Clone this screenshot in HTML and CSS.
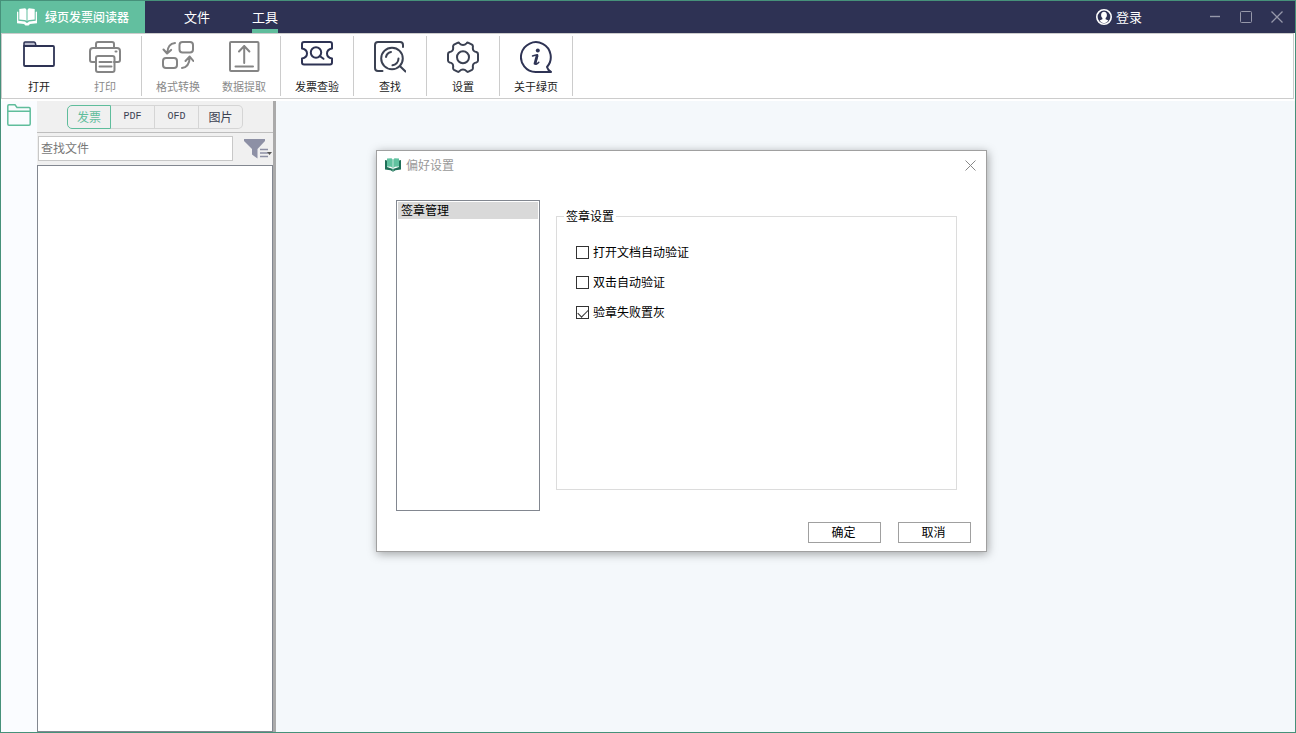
FILE: index.html
```html
<!DOCTYPE html>
<html lang="zh-CN">
<head>
<meta charset="utf-8">
<title>绿页发票阅读器</title>
<link rel="stylesheet" href="styles.css">
</head>
<body>
<div class="app">
  <header class="titlebar">
    <div class="brand">
      <svg class="brand-logo" width="20" height="18" viewBox="0 0 20 18" fill="#fff"><path d="M2.300 1 8 .300Q9.300.800 9.500 2v11Q8.800 12 7.500 11.900L2.300 11.500zM17.700 1 12 .300q-1.300.500-1.500 1.700v11q.700-1 2-1.100l5.200-.400z"/><path d="M0 3.500 1.300 4v8.700l6.700.800 1.300 1.300h1.400l1.300-1.300 6.700-.800V4L20 3.500v11.700l-7 .900-1.500 1.400h-3L7 16.100l-7-.900z"/></svg>
      <span>绿页发票阅读器</span>
    </div>
    <nav class="menu">
      <button class="menu-item" type="button">文件</button>
      <button class="menu-item is-active" type="button">工具</button>
    </nav>
    <button class="login" type="button">
      <svg width="16" height="16" viewBox="0 0 16 16"><circle cx="8" cy="8" r="7.200" fill="none" stroke="#fff" stroke-width="1.600"/><path d="M8 2.800c1.900 0 2.900 1.300 2.900 3.200 0 1.500-.6 2.500-1.300 3.100v1.200l2.800 1.200A6 6 0 0 1 8 14.300a6 6 0 0 1-4.400-2.800l2.800-1.200V9.100C5.700 8.500 5.100 7.500 5.100 6c0-1.900 1-3.200 2.900-3.200z" fill="#fff"/></svg>
      <span>登录</span>
    </button>
    <div class="window-controls">
      <button type="button" aria-label="最小化"><svg width="12" height="12" viewBox="0 0 12 12"><path d="M1 5.500h10" stroke-width="1.400"/></svg></button>
      <button type="button" aria-label="最大化"><svg width="12" height="12" viewBox="0 0 12 12"><rect x=".5" y=".5" width="11" height="11" rx="1"/></svg></button>
      <button type="button" aria-label="关闭"><svg width="12" height="12" viewBox="0 0 12 12"><path d="M.5.500l11 11M11.500.500l-11 11" stroke-width="1.300"/></svg></button>
    </div>
  </header>

  <div class="toolbar">
    <div class="tool-group">
      <button class="tool" type="button">
        <svg class="navy" viewBox="0 0 32 32"><path d="M1 1h11l1 4H1z" fill="#b9bbcc" stroke="none"/><path d="M1 5V2q0-1 1-1h9q1 0 1.300 1l.7 3" stroke-width="1.500"/><path d="M1 5h29q1 0 1 1v18q0 1-1 1H2q-1 0-1-1z" stroke-width="1.800"/></svg>
        <span>打开</span>
      </button>
      <button class="tool is-disabled" type="button">
        <svg class="gray" viewBox="0 0 32 32"><path d="M7 7V3q0-2 2-2h14q2 0 2 2v4M7 21H3q-2 0-2-2v-9q0-3 3-3h24q3 0 3 3v9q0 2-2 2h-4"/><rect x="7" y="15" width="18.500" height="16" rx="2"/><path d="M10.500 21h12M10.500 25.500h12"/><path d="M26.500 10.500h1"/></svg>
        <span>打印</span>
      </button>
    </div>
    <div class="tool-group">
      <button class="tool is-disabled" type="button">
        <svg class="gray" viewBox="0 0 32 32"><rect x="17.500" y="1" width="13.500" height="10.500" rx="3"/><rect x="1" y="17" width="14" height="10" rx="3"/><path d="M13 2C8 2.500 5.500 6 5.200 12M1.500 8.500l3.600 4 4-3.600M20 27c5-.5 7.500-4 7.800-11M23.500 20l4.200-4.500 3.600 4.500"/></svg>
        <span>格式转换</span>
      </button>
      <button class="tool is-disabled" type="button">
        <svg class="gray" viewBox="0 0 32 32"><rect x="2" y="1" width="28.500" height="29" rx="1"/><path d="M16.200 22V5M11 10.500 16.200 5l5.200 5.500M7.500 25.500h17.500"/></svg>
        <span>数据提取</span>
      </button>
    </div>
    <div class="tool-group">
      <button class="tool" type="button">
        <svg class="navy" viewBox="0 0 32 32"><path d="M1 7.500V3q0-2 2-2h26q2 0 2 2v4.500q-5 1-5 5t5 5V21.500q0 2-2 2H3q-2 0-2-2v-4q5-1 5-5t-5-5z"/><circle cx="15" cy="11.500" r="5.200"/><path d="M18.700 15l3.800 2.800"/></svg>
        <span>发票查验</span>
      </button>
    </div>
    <div class="tool-group">
      <button class="tool" type="button">
        <svg class="slate" viewBox="0 0 32 32"><path d="M8.500 30H4q-3 0-3-3V4q0-3 3-3h22q3 0 3 3v2"/><circle cx="18" cy="17.500" r="10.800"/><path d="M12 16c.5-2.500 2.500-4.500 5-5M24.500 17.500c0 4-3 6.500-6 6.800M25.800 25l5.700 5.500"/></svg>
        <span>查找</span>
      </button>
    </div>
    <div class="tool-group">
      <button class="tool" type="button">
        <svg class="slate" viewBox="0 0 32 32"><path d="M16 4q2 0 3.500-1.700.8-1 2-.5L25 3.600q1.100.7.900 2.400-.6 4.500 3.400 5 1.700.5 1.700 2v6.500q0 1.500-1.700 2-4 .5-3.400 5 .2 1.700-.9 2.400l-3.500 1.800q-1.200.5-2-.5Q18 28.500 16 28.500t-3.500 1.700q-.8 1-2 .5L7 28.900q-1.100-.7-.9-2.400.6-4.500-3.400-5-1.700-.5-1.700-2V13q0-1.500 1.700-2 4-.5 3.400-5Q5.900 4.300 7 3.600l3.500-1.800q1.200-.5 2 .5Q14 4 16 4z"/><circle cx="16" cy="16.300" r="6"/></svg>
        <span>设置</span>
      </button>
    </div>
    <div class="tool-group">
      <button class="tool" type="button">
        <svg class="navy" viewBox="0 0 32 32"><path d="M27 26A14.900 14.900 0 1 0 16 31h15q-3-1.500-4-5z"/><circle cx="17.800" cy="9.500" r="2" fill="#2e3354" stroke="none"/><path d="M12.500 15q2.500-1 5-1.200L15.500 22q-.3 1.500 1 1 1.200-.5 2.300-1.700" stroke-width="1.500"/><path d="M17 15l-2 7.500" stroke-width="2.800"/></svg>
        <span>关于绿页</span>
      </button>
    </div>
  </div>

  <main class="body">
    <aside class="rail">
      <button type="button" aria-label="文件夹"><svg width="24" height="22" viewBox="0 0 24 22" fill="none" stroke="#5fbd9c" stroke-width="1.500"><path d="M.8 20V2Q.8.800 2 .800h6l2 2.700h12q1.200 0 1.200 1.200V20q0 1.200-1.200 1.200H2Q.8 21.200.8 20zM.8 7.200h22.400"/></svg></button>
    </aside>
    <section class="sidebar">
      <div class="tabs">
        <button class="tab is-active" type="button">发票</button>
        <button class="tab latin" type="button">PDF</button>
        <button class="tab latin" type="button">OFD</button>
        <button class="tab" type="button">图片</button>
      </div>
      <div class="search">
        <input type="text" placeholder="查找文件" aria-label="查找文件">
        <button class="filter" type="button" aria-label="筛选"><svg width="28" height="20" viewBox="0 0 28 20"><path d="M0 0h21v2l-7.500 8v9.500L8 15.500V10L0 2z" fill="#8d90a5"/><path d="M16 10.500h8M16 14h8M16 17.500h8" stroke="#8d90a5" stroke-width="1.300"/><path d="M23 13h5l-2.500 3z" fill="#555"/></svg></button>
      </div>
      <div class="file-list"></div>
    </section>
    <section class="canvas"></section>

    <form class="dialog" role="dialog" aria-labelledby="dialog-title">
      <div class="dialog-head">
        <svg width="16" height="14" viewBox="0 0 16 14"><path d="M0 2 2 2.500V9l6 2 6-2V2.500L16 2v9.500l-5.500.800L8 13.800l-2.500-1.500L0 11.500z" fill="#1f7058"/><path d="M2 .500 6.500.300 7.700 1.500V10L6 8.800 2 8.500zM14 .500 9.500.300 8.300 1.500V10L10 8.800l4-.300z" fill="#61c2a0"/><path d="M8 9.500v4" stroke="#a7d9c8" stroke-width=".8"/></svg>
        <h1 id="dialog-title">偏好设置</h1>
        <button class="dialog-close" type="button" aria-label="关闭"><svg width="11" height="11" viewBox="0 0 11 11" stroke="#888"><path d="M.5.500l10 10M10.500.500l-10 10"/></svg></button>
      </div>
      <div class="dialog-body">
        <ul class="categories">
          <li class="category">签章管理</li>
        </ul>
        <fieldset class="options">
          <legend>签章设置</legend>
          <label><input type="checkbox"><span>打开文档自动验证</span></label>
          <label><input type="checkbox"><span>双击自动验证</span></label>
          <label><input type="checkbox" checked><span>验章失败置灰</span></label>
        </fieldset>
      </div>
      <div class="dialog-actions">
        <button type="button">确定</button>
        <button type="button">取消</button>
      </div>
    </form>
  </main>
</div>
</body>
</html>
```

FILE: styles.css
```css
* {
  box-sizing: border-box;
}

body {
  margin: 0;
  font: 12px/16px "Noto Sans CJK SC", sans-serif;
  color: #000;
}

button {
  margin: 0;
  padding: 0;
  border: 0;
  background: none;
  color: inherit;
  font: inherit;
}

svg {
  display: block;
}

.app {
  display: flex;
  flex-direction: column;
  min-height: 100vh;
  border: 1px solid #46917a;
  background: #fff;
}

/* Title bar */
.titlebar {
  display: flex;
  align-items: stretch;
  height: 32px;
  background: #2e3254;
  color: #fff;
}

.brand {
  display: flex;
  align-items: center;
  gap: 8px;
  width: 144px;
  padding-left: 16px;
  background: #62bf9f;
  font-weight: 500;
}

.menu {
  display: flex;
  gap: 42px;
  padding-left: 39px;
}

.menu-item {
  border-bottom: 4px solid transparent;
  padding-top: 3px;
  font-size: 13px;
}

.menu-item.is-active {
  border-bottom-color: #5fbd9c;
}

.login {
  display: flex;
  align-items: center;
  gap: 4px;
  margin-left: auto;
  font-size: 13px;
}

.window-controls {
  display: flex;
  align-items: center;
  gap: 19px;
  padding: 0 12px 0 67px;
}

.window-controls svg {
  fill: none;
  stroke: #9698aa;
}

/* Toolbar */
.toolbar {
  display: flex;
  margin-right: 1px;
  padding: 2px 1px;
  border: 1px solid #ccc;
  height: 66px;
}

.tool-group {
  display: flex;
  padding: 0 3px;
  border-right: 1px solid #ccc;
}

.tool {
  display: flex;
  flex-direction: column;
  align-items: center;
  justify-content: space-between;
  width: 66px;
  padding: 5px 0 2px;
  color: #222;
  font-size: 11px;
}

.tool.is-disabled {
  color: #8a8a8a;
}

.tool svg {
  width: 32px;
  height: 32px;
  fill: none;
  stroke-width: 2;
  stroke-linecap: round;
  stroke-linejoin: round;
}

.navy {
  stroke: #2e3354;
}

.slate {
  stroke: #3b4152;
}

.gray {
  stroke: #858585;
}

/* Work area */
.body {
  position: relative;
  display: flex;
  flex: 1;
  padding-top: 2px;
}

.rail {
  width: 36px;
  padding: 3px 6px;
  background: #fafcff;
}

.sidebar {
  display: flex;
  flex-direction: column;
  width: 239px;
  border-right: 3px solid #aaa;
  background: #f0f0f0;
}

.tabs {
  display: flex;
  justify-content: center;
  padding: 4px 0 3px;
  border-bottom: 1px solid #bebebe;
}

.tab {
  width: 44px;
  height: 24px;
  border: 1px solid #d5d5d5;
  border-left-width: 0;
  color: #3b4152;
}

.tab.latin {
  font-family: "Liberation Mono", monospace;
  font-size: 10px;
}

.tab:last-child {
  border-radius: 0 5px 5px 0;
}

.tab.is-active {
  border: 1px solid #5fbd9c;
  border-radius: 5px 0 0 5px;
  color: #5fbd9c;
}

.search {
  display: flex;
  align-items: center;
  gap: 11px;
  padding: 3px 1px 4px;
}

.search input {
  flex: 1;
  min-width: 0;
  height: 25px;
  margin: 0;
  padding: 0 2px 2px;
  border: 1px solid #c8c8c8;
  background: #fff;
  font: inherit;
}

.search input::placeholder {
  color: #777;
}

.file-list {
  flex: 1;
  border: 1px solid #828790;
  background: #fff;
}

.canvas {
  flex: 1;
  background: #f4f8fb;
}

/* Preferences dialog floats above the canvas */
.dialog {
  position: absolute;
  top: 51px;
  left: 375px;
  width: 611px;
  border: 1px solid #a0a0a0;
  background: #fff;
  box-shadow: 1px 2px 9px rgba(0, 0, 0, 0.35);
}

.dialog-head {
  display: flex;
  align-items: center;
  gap: 5px;
  height: 28px;
  padding: 0 10px 0 8px;
}

.dialog-head h1 {
  margin: 0;
  color: #999;
  font-size: 12px;
  font-weight: 400;
}

.dialog-close {
  margin-left: auto;
}

.dialog-body {
  display: flex;
  gap: 16px;
  padding: 21px 29px 0 19px;
}

.categories {
  width: 144px;
  height: 311px;
  margin: 0;
  padding: 1px;
  border: 1px solid #828790;
  list-style: none;
}

.category {
  height: 17px;
  padding-left: 3px;
  background: #d9d9d9;
}

.options {
  flex: 1;
  min-width: 0;
  margin: 8px 0 21px;
  padding: 13px 19px;
  border: 1px solid #dcdcdc;
}

.options legend {
  margin-left: -12px;
  padding: 0 2px;
}

.options label {
  display: flex;
  align-items: center;
  gap: 4px;
  height: 30px;
}

.options input {
  appearance: none;
  width: 13px;
  height: 13px;
  margin: 0;
  border: 1px solid #333;
  background: #fff;
}

.options input:checked::before {
  content: "";
  display: block;
  width: 9px;
  height: 5px;
  margin: 2px 1px;
  border: solid #333;
  border-width: 0 0 1px 1px;
  transform: rotate(-45deg);
}

.dialog-actions {
  display: flex;
  justify-content: flex-end;
  gap: 17px;
  padding: 11px 15px 8px;
}

.dialog-actions button {
  width: 73px;
  height: 21px;
  padding: 0 2px 2px 0;
  border: 1px solid #a0a0a0;
}
```
